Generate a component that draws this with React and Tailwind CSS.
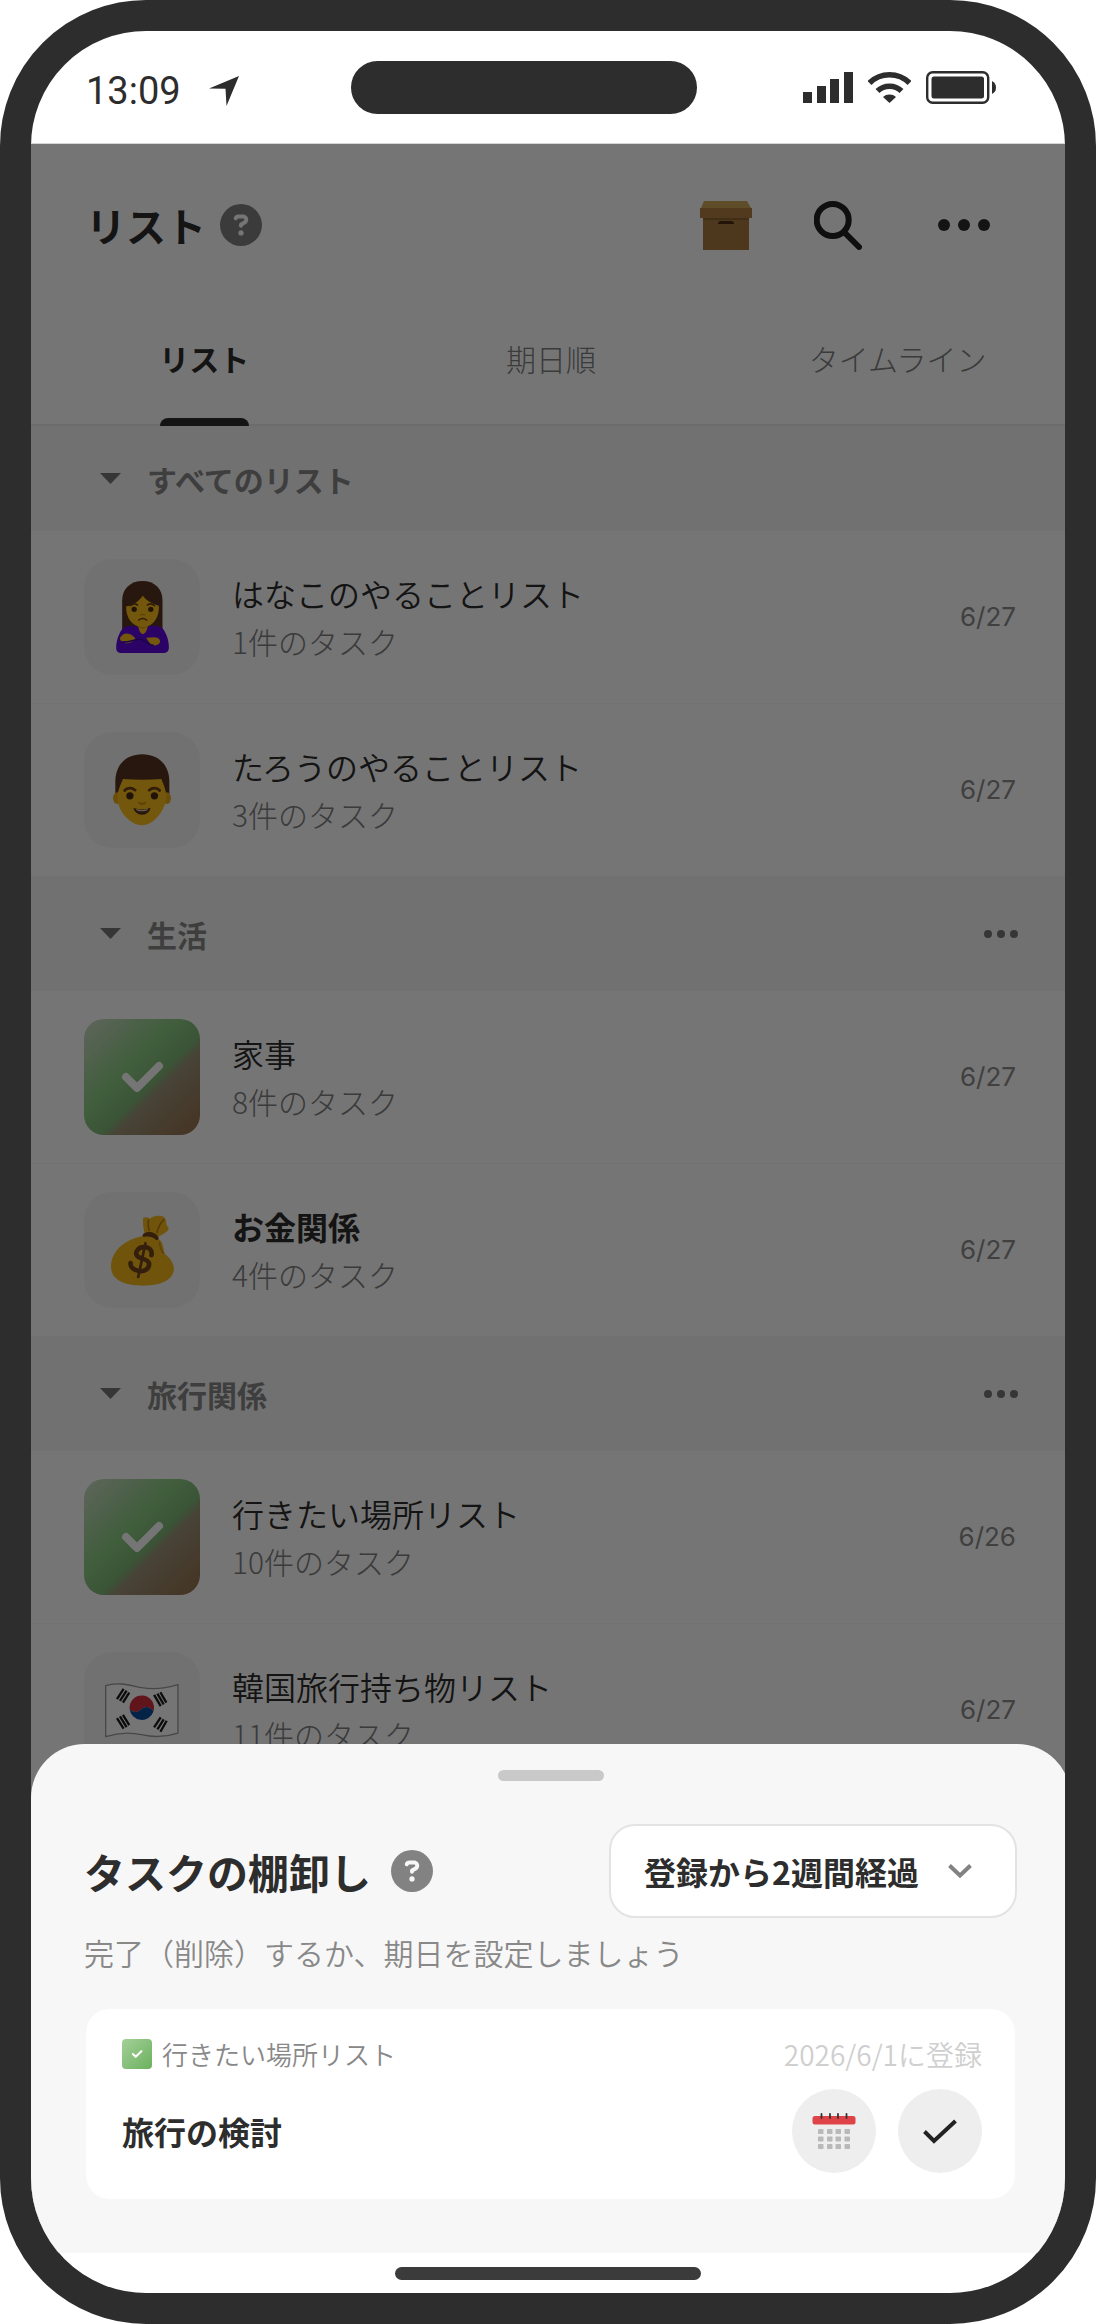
import React from "react";
import { FaCircleQuestion } from "react-icons/fa6";

function BoxIcon() {
  return (
    <svg viewBox="0 0 52 49" className="h-[49px] w-[52px]" aria-hidden="true">
      <path d="M4 0h43l4 7H1z" fill="#d0a65a" />
      <path d="M3 16h46v33H3z" fill="#a97840" />
      <path d="M0 7h52v10H0z" fill="#b17f42" />
      <path d="M3 17h46v2H3z" fill="#8f6433" />
      <path d="M18 23q0-3 3-3h10q3 0 3 3z" fill="#4a2c12" />
    </svg>
  );
}

function SearchIcon() {
  return (
    <svg viewBox="0 0 48 49" className="h-[49px] w-12" fill="none" stroke="#222" strokeWidth="6" strokeLinecap="round" aria-hidden="true">
      <circle cx="18.7" cy="19" r="16" />
      <path d="M30.5 31.5 45 46" />
    </svg>
  );
}

function CheckTile({ className }) {
  return (
    <span className={`flex shrink-0 items-center justify-center ${className}`}>
      <svg viewBox="0 0 116 116" className="size-full" fill="none" stroke="#fff" strokeWidth="8" strokeLinecap="round" strokeLinejoin="round" aria-hidden="true">
        <path d="M42 58l11 11 22-22" />
      </svg>
    </span>
  );
}

function WomanIcon() {
  return (
    <svg viewBox="107 90 158 216" className="h-[72px] w-[53px]" aria-hidden="true">
      <path d="M125 236V148c0-36 26-58 61-58s60 22 60 58v88z" fill="#55331f" />
      <path d="M172 205h30v40h-30z" fill="#e0a20f" />
      <path d="M137 166c22-3 38-16 50-32 10 14 26 24 48 30 2 35-17 64-49 64s-50-28-49-62z" fill="#fabd1c" />
      <path d="M174 228c5 12 21 12 27 0 14-6 36-6 45 4 12 14 20 40 19 58 0 10-6 16-18 16H124c-12 0-17-6-17-16 0-20 8-44 20-58 10-9 32-9 47-4z" fill="#5f08e0" />
      <path d="M174 228c2 14 8 21 13 21s12-7 14-21l-14 6z" fill="#fabd1c" />
      <path d="M118 262c6-14 20-17 31-12 8 3 14 9 16 15-12 12-29 15-40 8-4-3-6-6-7-11z" fill="#fabd1c" />
      <path d="M197 260c14 0 27-3 35 1 6 4 9 10 5 16-5 6-16 8-22 5-8-5-12-13-18-22z" fill="#fabd1c" />
      <path d="M122 273c24 4 44-11 60-8 13 3 22 20 38 18" fill="none" stroke="#3d0a9c" strokeWidth="5" />
      <circle cx="161" cy="175" r="8" fill="#4b2b15" />
      <circle cx="211" cy="175" r="8" fill="#4b2b15" />
      <path d="M150 164c6-6 14-7 21-2M201 162c7-5 15-4 21 2M175 207c6-6 17-6 23 0" fill="none" stroke="#6b3f14" strokeWidth="5" strokeLinecap="round" />
      <path d="M180 191h12" stroke="#d48e10" strokeWidth="4" strokeLinecap="round" />
    </svg>
  );
}

function ManIcon() {
  return (
    <svg viewBox="98 610 175 215" className="h-[72px] w-[58px]" aria-hidden="true">
      <path d="M105 740v-48c0-52 34-82 81-82s82 30 82 82v48z" fill="#55331f" />
      <ellipse cx="111" cy="742" rx="13" ry="18" fill="#e8aa14" />
      <ellipse cx="261" cy="742" rx="12" ry="18" fill="#e8aa14" />
      <path d="M128 684q58 5 116 0c4 12 12 26 15 48 0 20-6 40-18 56-14 20-34 36-55 36s-42-14-57-34c-13-18-18-38-17-58 3-22 12-36 16-48z" fill="#fabd1c" />
      <circle cx="149" cy="735" r="11" fill="#4b2b15" />
      <circle cx="223" cy="735" r="11" fill="#4b2b15" />
      <path d="M133 719c8-9 22-10 32-1M207 718c10-9 24-8 32 1" fill="none" stroke="#6b3f14" strokeWidth="8" strokeLinecap="round" />
      <path d="M160 772q26 9 51 0c-2 12-12 20-25 20s-24-8-26-20z" fill="#55331f" />
      <path d="M167 775q19 5 37 0-1 4-6 5-13 3-26 0-4-1-5-5z" fill="#d9c7a8" />
      <path d="M177 756q9 8 18 0" fill="none" stroke="#d48e10" strokeWidth="6" strokeLinecap="round" />
    </svg>
  );
}

function MoneyIcon() {
  return (
    <svg viewBox="92 610 190 212" className="h-[71px] w-[63px]" aria-hidden="true">
      <path d="M193 664c-4-17-6-33-4-46 8-4 14-2 20 2 10-10 30-12 43-5 10 10 3 22 12 30 8 10-12 20-30 30-14-9-28-11-41-11z" fill="#f4b81c" />
      <path d="M205 622q-3 18 2 36M252 622q-16 16-22 42" fill="none" stroke="#b87f10" strokeWidth="5" />
      <path d="M192 672c16-4 36 2 48 12 10 12 10 26 14 42 12 10 26 24 28 44 0 32-36 52-92 52s-98-16-98-58c0-46 42-84 100-92z" fill="#f4b81c" />
      <path d="M238 690q2 24 14 36" fill="none" stroke="#c88b12" strokeWidth="4" />
      <path d="M188 668c8-12 40-10 48 10-1 5-4 7-8 6-12-10-24-11-37-9-4 0-5-4-3-7z" fill="#71421b" />
      <path d="M214 730c4-14-8-26-24-24-16 1-26 14-20 25 8 12 36 8 37 26 0 14-14 24-30 21-16-3-28-12-26-24" fill="none" stroke="#71421b" strokeWidth="14" strokeLinecap="round" />
      <path d="M196 694l-22 102" fill="none" stroke="#71421b" strokeWidth="8" strokeLinecap="round" />
    </svg>
  );
}

function FlagIcon() {
  return (
    <svg viewBox="76 128 223 166" className="h-[55px] w-[74px]" aria-hidden="true">
      <path d="M78 136c36-12 72-1 108 6 36 6 74 2 110-9v146c-36 12-72 14-110 5-36-8-72-6-108 6z" fill="#fff" stroke="#9b9b9b" strokeWidth="4" />
      <path d="M150 206a37 37 0 1 1 72 8c-8-16-26-18-37-7-12 12-29 10-35-1z" fill="#d42f3c" />
      <path d="M150 206c6 11 23 13 35 1 11-11 29-9 37 7a37 37 0 0 1-72-8z" fill="#0d4d9c" />
      <g stroke="#1c1c1c" strokeWidth="7">
        <path d="M112 177l20-31M121 182l20-31M130 187l19-30" />
        <path d="M224 164l20 34M234 160l19 33M243 156l18 31" />
        <path d="M112 234l20 32M121 229l20 32M130 224l19 31" />
        <path d="M224 262l20-30M234 268l19-30M243 275l19-33" />
      </g>
    </svg>
  );
}

function CalendarIcon() {
  return (
    <svg viewBox="0 0 44 36" className="h-9 w-11" aria-hidden="true">
      <rect x="0.5" y="3" width="43" height="8.500" rx="2.500" fill="#df4347" />
      <path d="M9.500 1v4M18 1v4M26 1v4M34.500 1v4" stroke="#333" strokeWidth="1.800" strokeLinecap="round" />
      <g fill="#b9b9b9">
        {[16, 23.5, 31].map((y) =>
          [6, 15, 23.5, 32.5].map((x) => <rect key={`${x}-${y}`} x={x} y={y} width="5.500" height="5" rx="0.8" />)
        )}
      </g>
    </svg>
  );
}

function StatusBar() {
  return (
    <header className="grid h-[113px] grid-cols-[265px_346px_1fr] items-center border-b border-[#d4d4d4] px-[55px]">
      <div className="flex items-center gap-7 pt-2">
        <time className="font-[Roboto] text-[38px] leading-none text-[#2d2d2d]">13:09</time>
        <svg viewBox="0 0 30 30" className="size-[30px]" fill="#2d2d2d" aria-hidden="true">
          <path d="M0 12.500 30 0 17.500 30 16.500 12.800z" />
        </svg>
      </div>
      <div className="h-[53px] rounded-full bg-[#2d2d2d]" />
      <div className="flex items-center justify-end gap-[15px] pr-3.5">
        <svg viewBox="0 0 50 31" className="h-[31px] w-[50px]" fill="#2d2d2d" aria-hidden="true">
          <path d="M0 20h9v11H0zM14 14h9v17h-9zM27 7h9v24h-9zM41 0h9v31h-9z" />
        </svg>
        <svg viewBox="0 0 43 31" className="h-[31px] w-[43px]" fill="none" stroke="#2d2d2d" strokeWidth="5.500" aria-hidden="true">
          <path d="M1.500 11C12.500 0 30.500 0 41.500 11M9.500 19c6.500-6.500 17.500-6.500 24 0" />
          <path d="M21.500 31 15 25c3.500-3.300 9.500-3.300 13 0z" fill="#2d2d2d" stroke="none" />
        </svg>
        <svg viewBox="0 0 70 33" className="h-[33px] w-[70px]" fill="#2d2d2d" aria-hidden="true">
          <rect x="1.200" y="1.200" width="61" height="30.600" rx="5.500" fill="none" stroke="#2d2d2d" strokeWidth="2.400" />
          <rect x="5.500" y="5.500" width="52.500" height="22" rx="2.500" />
          <path d="M66 10q4 2 4 6.500T66 23z" />
        </svg>
      </div>
    </header>
  );
}

function Section({ title, menu, children }) {
  return (
    <section>
      <div className={`flex items-center bg-[#f6f6f6] pr-[53px] pl-[69px] ${menu ? "h-[115px]" : "h-[105px]"}`}>
        <button type="button" className="flex items-center gap-[26px] text-[30px] leading-[44px] font-bold text-[#888]">
          <svg viewBox="0 0 21 11" className="h-[11px] w-[21px]" fill="#777" aria-hidden="true">
            <path d="M0 0h21L10.500 11z" />
          </svg>
          {title}
        </button>
        {menu && (
          <button type="button" aria-label={`${title}のメニュー`} className="ml-auto flex gap-[5px]">
            <i className="size-2 rounded-full bg-[#777]" />
            <i className="size-2 rounded-full bg-[#777]" />
            <i className="size-2 rounded-full bg-[#777]" />
          </button>
        )}
      </div>
      <ul className="divide-y divide-[#f6f6f6]">{children}</ul>
    </section>
  );
}

function Row({ icon, title, count, date, bold }) {
  return (
    <li>
      <a href="#list" className="flex items-center py-7 pr-[55px] pl-[53px]">
        {icon ? (
          <span className="flex size-[116px] shrink-0 items-center justify-center rounded-[28px] bg-[#f7f7f7]">{icon}</span>
        ) : (
          <CheckTile className="size-[116px] rounded-[20px] bg-[linear-gradient(135deg,#cfdcc8_0%,#8ccc84_40%,#80b877_57%,#9c9478_63%,#966f4c_100%)]" />
        )}
        <span className="ml-8 flex flex-1 flex-col leading-[48px]">
          <span className={`text-[32px] text-[#2d2d2d] ${bold ? "font-bold" : "font-[350]"}`}>{title}</span>
          <span className="text-[30px] font-light text-[#808080]">{count}件のタスク</span>
        </span>
        <time className="font-[Inter] text-[26px] leading-8 text-[#8c8c8c]">{date}</time>
      </a>
    </li>
  );
}

function ReviewSheet() {
  return (
    <section className="absolute inset-x-0 bottom-0 flex flex-col rounded-t-[54px] bg-[#f7f7f7] pt-[26px] pr-[54px] pb-[54px] pl-[53px]">
      <div className="h-[11px] w-[106px] self-center rounded-full bg-[#c9c9c9]" />
      <div className="mt-[43px] flex items-center justify-between">
        <div className="flex items-center gap-5">
          <h2 className="text-[41px] leading-[60px] font-bold text-[#2d2d2d]">タスクの棚卸し</h2>
          <button type="button" aria-label="ヘルプ">
            <FaCircleQuestion className="size-[42px] text-[#828282]" />
          </button>
        </div>
        <div className="relative flex items-center">
          <select
            aria-label="表示するタスク"
            className="h-[94px] w-[408px] appearance-none rounded-[26px] border-2 border-[#e3e3e3] bg-white pl-[33px] text-[32px] font-bold text-[#2d2d2d]"
          >
            <option>登録から2週間経過</option>
          </select>
          <svg viewBox="0 0 24 14" className="pointer-events-none absolute right-[45px] h-3.5 w-6" fill="none" stroke="#828282" strokeWidth="4" aria-hidden="true">
            <path d="M1.500 1.500 12 11.500l10.500-10" />
          </svg>
        </div>
      </div>
      <p className="mt-3 text-[30px] leading-[44px] font-[350] text-[#888]">完了（削除）するか、期日を設定しましょう</p>
      <article className="mx-[2px] mt-[35px] rounded-[24px] bg-white pt-[30px] pr-[33px] pb-[26px] pl-9">
        <div className="flex h-[30px] items-center leading-[30px] font-[350]">
          <CheckTile className="size-[30px] rounded-[4px] bg-linear-135 from-[#a3cf99] to-[#6bb15d]" />
          <span className="ml-[10px] text-[26px] text-[#888]">行きたい場所リスト</span>
          <span className="ml-auto text-[28px] text-[#cfcfcf]">2026/6/1に登録</span>
        </div>
        <div className="mt-5 flex items-center gap-[22px]">
          <h3 className="flex-1 text-[32px] leading-[48px] font-bold text-[#2d2d2d]">旅行の検討</h3>
          <button type="button" aria-label="期日を設定" className="flex size-[84px] items-center justify-center rounded-full bg-[#eee]">
            <CalendarIcon />
          </button>
          <button type="button" aria-label="完了" className="flex size-[84px] items-center justify-center rounded-full bg-[#eee]">
            <svg viewBox="0 0 34 25" className="h-[25px] w-[34px]" fill="none" stroke="#222" strokeWidth="4" aria-hidden="true">
              <path d="M1.500 12.500 11 22 32.500 2" />
            </svg>
          </button>
        </div>
      </article>
    </section>
  );
}

export default function App() {
  return (
    <div className="flex min-h-screen flex-col overflow-hidden rounded-[146px] border-[31px] border-[#2d2d2d] bg-white font-['Noto_Sans_CJK_JP',sans-serif]">
      <StatusBar />
      <main className="relative -mr-[6px] flex-1 overflow-hidden">
        <div className="flex h-[162px] items-center pr-[53px] pl-[55px]">
          <h1 className="text-[40px] leading-[60px] font-bold text-[#2d2d2d]">リスト</h1>
          <button type="button" aria-label="ヘルプ" className="ml-3.5">
            <FaCircleQuestion className="size-[42px] text-[#828282]" />
          </button>
          <button type="button" aria-label="アーカイブ" className="ml-auto">
            <BoxIcon />
          </button>
          <button type="button" aria-label="検索" className="ml-[62px]">
            <SearchIcon />
          </button>
          <button type="button" aria-label="メニュー" className="mr-7 ml-[76px] flex gap-2">
            <i className="size-3 rounded-full bg-[#2d2d2d]" />
            <i className="size-3 rounded-full bg-[#2d2d2d]" />
            <i className="size-3 rounded-full bg-[#2d2d2d]" />
          </button>
        </div>
        <nav className="grid h-[120px] grid-cols-3 border-b-2 border-[#ebebeb] text-[30px] leading-[44px] text-[#808080]">
          <button type="button" className="flex flex-col items-center justify-end font-bold text-[#2d2d2d]">
            <span className="mb-[38px]">リスト</span>
            <span className="-mb-0.5 h-2 w-[89px] rounded-t-lg bg-[#2d2d2d]" />
          </button>
          <button type="button" className="self-end pb-11 font-light">期日順</button>
          <button type="button" className="self-end pb-11 font-light">タイムライン</button>
        </nav>
        <Section title="すべてのリスト">
          <Row icon={<WomanIcon />} title="はなこのやることリスト" count={1} date="6/27" />
          <Row icon={<ManIcon />} title="たろうのやることリスト" count={3} date="6/27" />
        </Section>
        <Section title="生活" menu>
          <Row title="家事" count={8} date="6/27" />
          <Row icon={<MoneyIcon />} title="お金関係" count={4} date="6/27" bold />
        </Section>
        <Section title="旅行関係" menu>
          <Row title="行きたい場所リスト" count={10} date="6/26" />
          <Row icon={<FlagIcon />} title="韓国旅行持ち物リスト" count={11} date="6/27" />
        </Section>
        <div className="absolute inset-0 bg-black/54" />
        <ReviewSheet />
      </main>
      <footer className="flex h-10 items-center justify-center">
        <div className="h-[13px] w-[306px] rounded-full bg-[#3b3b3b]" />
      </footer>
    </div>
  );
}
